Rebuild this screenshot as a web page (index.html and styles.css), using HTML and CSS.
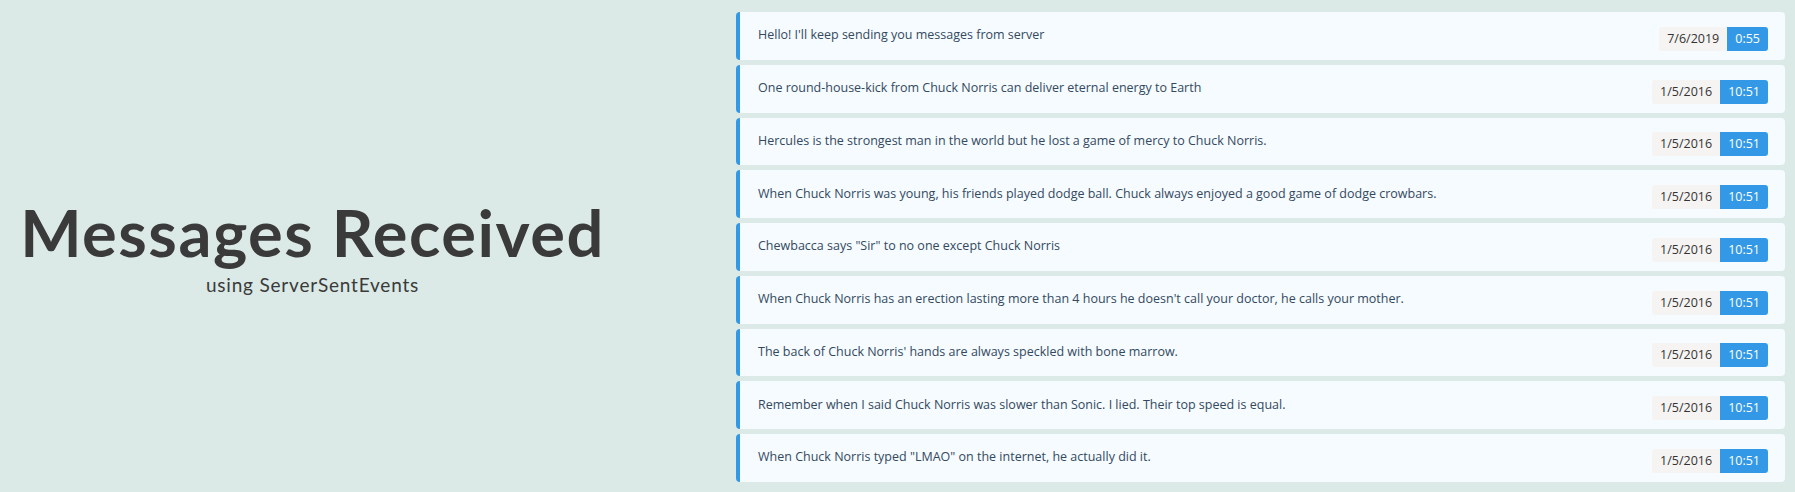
FILE: index.html
```html
<!DOCTYPE html>
<html>
<head>
<meta charset="utf-8">
<link rel="stylesheet" href="styles.css">
</head>
<body>
<div class="page">
  <header class="intro">
    <h1 class="title">Messages Received</h1>
    <p class="subtitle">using ServerSentEvents</p>
  </header>
  <ul class="messages">
    <li class="msg"><span class="text">Hello! I'll keep sending you messages from server</span><span class="stamp"><span class="date">7/6/2019</span><span class="time">0:55</span></span></li>
    <li class="msg"><span class="text">One round-house-kick from Chuck Norris can deliver eternal energy to Earth</span><span class="stamp"><span class="date">1/5/2016</span><span class="time">10:51</span></span></li>
    <li class="msg"><span class="text">Hercules is the strongest man in the world but he lost a game of mercy to Chuck Norris.</span><span class="stamp"><span class="date">1/5/2016</span><span class="time">10:51</span></span></li>
    <li class="msg"><span class="text">When Chuck Norris was young, his friends played dodge ball. Chuck always enjoyed a good game of dodge crowbars.</span><span class="stamp"><span class="date">1/5/2016</span><span class="time">10:51</span></span></li>
    <li class="msg"><span class="text">Chewbacca says "Sir" to no one except Chuck Norris</span><span class="stamp"><span class="date">1/5/2016</span><span class="time">10:51</span></span></li>
    <li class="msg"><span class="text">When Chuck Norris has an erection lasting more than 4 hours he doesn't call your doctor, he calls your mother.</span><span class="stamp"><span class="date">1/5/2016</span><span class="time">10:51</span></span></li>
    <li class="msg"><span class="text">The back of Chuck Norris' hands are always speckled with bone marrow.</span><span class="stamp"><span class="date">1/5/2016</span><span class="time">10:51</span></span></li>
    <li class="msg"><span class="text">Remember when I said Chuck Norris was slower than Sonic. I lied. Their top speed is equal.</span><span class="stamp"><span class="date">1/5/2016</span><span class="time">10:51</span></span></li>
    <li class="msg"><span class="text">When Chuck Norris typed "LMAO" on the internet, he actually did it.</span><span class="stamp"><span class="date">1/5/2016</span><span class="time">10:51</span></span></li>
  </ul>
</div>
</body>
</html>
```
FILE: styles.css
```css
html, body {
  margin: 0;
  padding: 0;
  background: #dbeae6;
}
body {
  font-family: "Open Sans", "Noto Sans", sans-serif;
}
.page {
  display: flex;
  height: 492px;
}
.intro {
  width: 625px;
  flex: none;
  box-sizing: border-box;
  padding-top: 200px;
  display: flex;
  flex-direction: column;
  align-items: center;
  color: #3a3a3a;
  font-family: Lato, "Open Sans", sans-serif;
}
.title {
  margin: 0;
  font-size: 65px;
  font-weight: 700;
  line-height: 1;
  letter-spacing: 1.5px;
  white-space: nowrap;
}
.subtitle {
  margin: 9px 0 0;
  font-size: 19px;
  line-height: 1.2;
  letter-spacing: 0.8px;
  white-space: nowrap;
}
.messages {
  list-style: none;
  margin: 12px 0 0 111px;
  padding: 0;
  width: 1049px;
  display: flex;
  flex-direction: column;
  gap: 5px;
}
.msg {
  height: 47.75px;
  box-sizing: border-box;
  background: #f5fbfe;
  border-left: 4px solid #3399e6;
  border-radius: 4px;
  padding: 0 17px 0 18px;
  display: flex;
  align-items: center;
  justify-content: space-between;
  color: #34495e;
  font-size: 12.5px;
}
.text {
  margin-top: -2px;
}
.stamp {
  display: flex;
  height: 24px;
  margin-top: 6px;
  font-size: 12.5px;
  line-height: 24px;
}
.date {
  background: #f5f4f2;
  color: #333;
  padding: 0 8px;
  border-radius: 3px 0 0 3px;
}
.time {
  background: #3399e6;
  color: #fff;
  padding: 0 8px;
  border-radius: 0 3px 3px 0;
}
```
